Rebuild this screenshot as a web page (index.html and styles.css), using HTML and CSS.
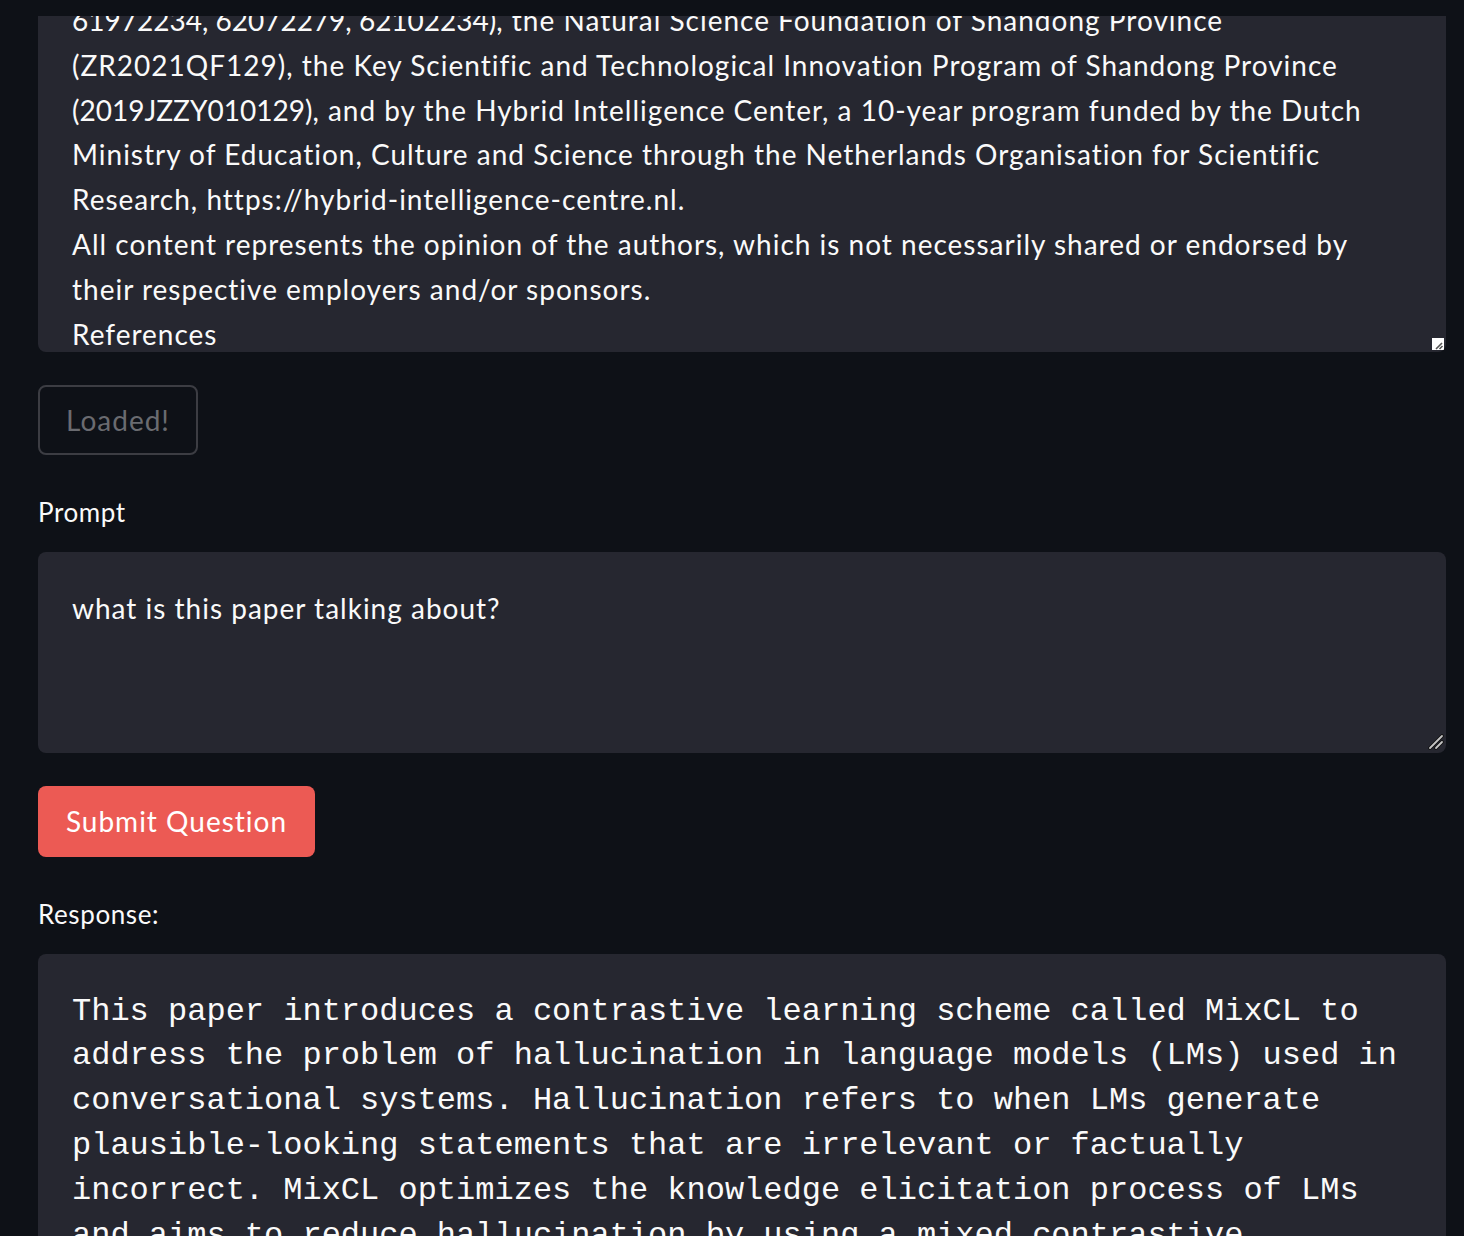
FILE: index.html
```html
<!DOCTYPE html>
<html lang="en">
<head>
<meta charset="utf-8">
<title>Paper Q&amp;A</title>
<link rel="stylesheet" href="styles.css">
</head>
<body>
<main class="app">
  <div class="doc-box">
    <div class="doc-text">
      <div><span class="num">61972234, 62072279, 62102234)</span>, the Natural Science Foundation of Shandong Province</div>
      <div>(ZR2021QF129), the Key Scientific and Technological Innovation Program of Shandong Province</div>
      <div><span class="num">(2019JZZY010129)</span>, and by the Hybrid Intelligence Center, a 10-year program funded by the Dutch</div>
      <div>Ministry of Education, Culture and Science through the Netherlands Organisation for Scientific</div>
      <div>Research, https://hybrid-intelligence-centre.nl.</div>
      <div>All content represents the opinion of the authors, which is not necessarily shared or endorsed by</div>
      <div>their respective employers and/or sponsors.</div>
      <div>References</div>
      <div>[1] Daniel Adiwardana, Minh-Thang Luong, David R. So, Jamie Hall, Noah Fiedel, Romal Thoppilan</div>
    </div>
    <span class="scroll-corner">
      <svg viewBox="0 0 12 12" width="12" height="12"><path d="M4 11 L10 5 M7.5 11 L10.5 8" stroke="#555" stroke-width="1.6" fill="none"/></svg>
    </span>
  </div>

  <button class="btn btn-disabled" disabled>Loaded!</button>

  <label class="field-label">Prompt</label>
  <div class="prompt-box">
    <div class="prompt-text">what is this paper talking about?</div>
    <svg class="grip" viewBox="0 0 16 16" width="16" height="16">
      <path d="M2 14 L14 2 M8 14 L14 8" stroke="#111" stroke-width="3.6" stroke-linecap="round" fill="none"/>
      <path d="M2 14 L14 2 M8 14 L14 8" stroke="#c4c4c4" stroke-width="1.8" stroke-linecap="round" fill="none"/>
    </svg>
  </div>

  <button class="btn btn-primary">Submit Question</button>

  <p class="response-label">Response:</p>
  <div class="response-box">
    <p class="response-text">This paper introduces a contrastive learning scheme called MixCL to address the problem of hallucination in language models (LMs) used in conversational systems. Hallucination refers to when LMs generate plausible-looking statements that are irrelevant or factually incorrect. MixCL optimizes the knowledge elicitation process of LMs and aims to reduce hallucination by using a mixed contrastive learning objective and a negative sampling strategy.</p>
  </div>
</main>
</body>
</html>
```

FILE: styles.css
```css
html, body {
  margin: 0;
  background: #0e1117;
}

body {
  color: #fafafa;
  font-family: Lato, "Open Sans", "Noto Sans", sans-serif;
  font-size: 28px;
  line-height: 44.8px;
  letter-spacing: 1px;
}

.app {
  display: flex;
  flex-direction: column;
  align-items: flex-start;
  padding: 16px 18px 0 38px;
}

.doc-box {
  align-self: stretch;
  position: relative;
  height: 336px;
  overflow: hidden;
  box-sizing: border-box;
  padding: 0 34px;
  background: #262730;
  border-radius: 0 0 8px 8px;
}

.doc-text {
  margin-top: -18px;
  white-space: nowrap;
}

.num {
  letter-spacing: 0;
}

.scroll-corner {
  position: absolute;
  right: 2px;
  bottom: 2px;
  width: 12px;
  height: 12px;
  background: #ffffff;
  display: block;
}

.scroll-corner svg {
  display: block;
}

.btn {
  font-family: inherit;
  font-size: 28px;
  line-height: 44.8px;
  letter-spacing: 1px;
  border-radius: 8px;
  display: inline-flex;
  align-items: center;
  justify-content: center;
  box-sizing: border-box;
  padding: 0;
}

.btn-disabled {
  margin-top: 33px;
  width: 160px;
  height: 70px;
  background: transparent;
  color: #6a6b70;
  border: 2px solid #3c3d43;
}

.field-label {
  display: block;
  margin-top: 35px;
  font-size: 26px;
  letter-spacing: 0.6px;
}

.prompt-box {
  align-self: stretch;
  position: relative;
  margin-top: 17px;
  height: 201px;
  box-sizing: border-box;
  padding: 34px 34px;
  background: #262730;
  border-radius: 8px;
}

.grip {
  position: absolute;
  right: 2px;
  bottom: 3px;
  display: block;
}

.btn-primary {
  margin-top: 33px;
  width: 277px;
  height: 71px;
  background: #ec5a54;
  color: #ffffff;
  border: none;
}

.response-label {
  margin: 35px 0 0;
  font-size: 26px;
  letter-spacing: 0.6px;
}

.response-box {
  align-self: stretch;
  margin-top: 17px;
  box-sizing: border-box;
  padding: 36px 34px;
  background: #262730;
  border-radius: 8px;
}

.response-text {
  margin: 0;
  font-family: "Liberation Mono", "Courier New", monospace;
  font-size: 32px;
  line-height: 44.8px;
  letter-spacing: 0;
  white-space: pre-wrap;
}
```
